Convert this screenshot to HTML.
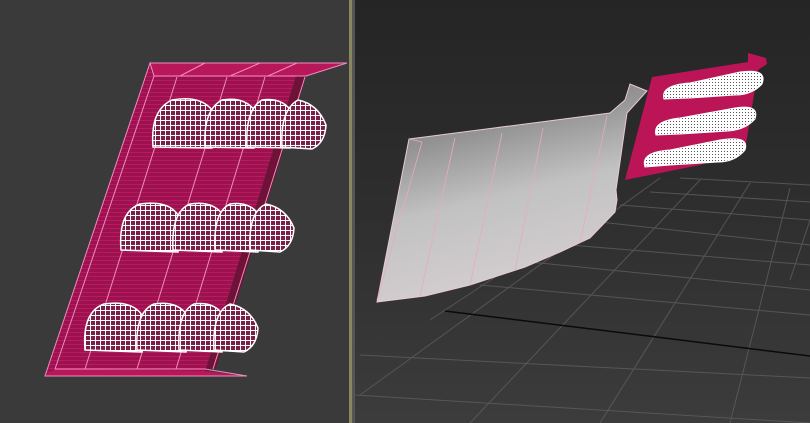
<!DOCTYPE html>
<html><head><meta charset="utf-8"><style>html,body{margin:0;padding:0;background:#3a3a3a}svg{display:block}</style></head>
<body>
<svg width="810" height="423" viewBox="0 0 810 423" xmlns="http://www.w3.org/2000/svg">
<defs>
<linearGradient id="rbg" x1="0" y1="0" x2="0" y2="1">
<stop offset="0" stop-color="#252525"/><stop offset="0.5" stop-color="#2e2e2e"/><stop offset="1" stop-color="#3c3c3c"/>
</linearGradient>
<linearGradient id="glass" x1="0" y1="0" x2="0.3" y2="1">
<stop offset="0" stop-color="#7e7e7e"/><stop offset="0.3" stop-color="#929292"/><stop offset="0.6" stop-color="#c2c2c2"/><stop offset="1" stop-color="#d4ced0"/>
</linearGradient>
<pattern id="stripe" width="6" height="4" patternUnits="userSpaceOnUse">
<rect width="6" height="4" fill="#9c1250"/><rect width="6" height="1" fill="#b81a5c"/>
</pattern>
<pattern id="grid" width="5" height="5" patternUnits="userSpaceOnUse">
<rect width="5" height="5" fill="#7a1f48"/><path d="M0 0.5H5M0.5 0V5" stroke="#fff" stroke-width="1"/>
</pattern>
<pattern id="fine" width="3" height="3" patternUnits="userSpaceOnUse">
<rect width="3" height="3" fill="#fff"/><rect x="1" y="1" width="1" height="1" fill="#555"/>
</pattern>
</defs>
<rect x="0" y="0" width="350" height="423" fill="#3a3a3a"/>
<rect x="349" y="0" width="3" height="423" fill="#8a8660"/>
<rect x="352" y="0" width="3" height="423" fill="#555"/>
<rect x="355" y="0" width="455" height="423" fill="url(#rbg)"/>

<polygon points="150,63 347,63 306,76 296,76 205,372 247,376 45,376" fill="url(#stripe)"/>
<polygon points="296,76 306,76 216,368 205,372" fill="#6e1238"/>
<polygon points="150,63 347,63 306,76 154,76" fill="#b8185a"/>
<polygon points="45,376 247,376 205,371 55,369" fill="#b8185a"/>
<g stroke="#f08cc0" stroke-width="1" fill="none">
<polyline points="150,63 347,63 306,76 154,76 150,63 45,376 247,376 205,369 55,369"/>
<line x1="154" y1="76" x2="55" y2="369"/>
<line x1="177" y1="77" x2="85" y2="369"/>
<line x1="227" y1="77" x2="137" y2="369"/>
<line x1="265" y1="77" x2="176" y2="369"/>
<line x1="305" y1="77" x2="213" y2="369"/>
<line x1="180" y1="76" x2="205" y2="63"/><line x1="230" y1="76" x2="260" y2="63"/><line x1="268" y1="76" x2="297" y2="63"/>
</g>

<g stroke="#fff" stroke-width="1.5">
<g>
<path d="M153 147 Q150 110 172 100 Q200 95 212 110 Q215 130 212 148 Z" fill="url(#grid)"/>
<path d="M205 147 Q203 110 222 100 Q245 96 256 112 Q258 130 254 148 Z" fill="url(#grid)"/>
<path d="M247 147 Q245 110 262 100 Q282 97 292 112 Q294 130 290 148 Z" fill="url(#grid)"/>
<path d="M282 147 Q280 110 298 100 Q318 104 326 125 Q325 143 312 149 Z" fill="url(#grid)"/>
</g>
<g>
<path d="M121 250 Q118 212 140 204 Q168 200 178 215 Q181 232 178 252 Z" fill="url(#grid)"/>
<path d="M173 250 Q171 212 190 204 Q213 200 224 216 Q226 232 222 252 Z" fill="url(#grid)"/>
<path d="M215 250 Q213 212 230 204 Q250 201 260 216 Q262 232 258 252 Z" fill="url(#grid)"/>
<path d="M250 250 Q248 212 266 204 Q286 208 294 228 Q293 246 280 252 Z" fill="url(#grid)"/>
</g>
<g>
<path d="M85 350 Q82 312 104 304 Q132 300 142 315 Q145 332 142 352 Z" fill="url(#grid)"/>
<path d="M137 350 Q135 312 154 304 Q177 300 188 316 Q190 332 186 352 Z" fill="url(#grid)"/>
<path d="M179 350 Q177 312 194 304 Q214 301 224 316 Q226 332 222 352 Z" fill="url(#grid)"/>
<path d="M214 350 Q212 312 230 304 Q250 308 258 328 Q257 346 244 352 Z" fill="url(#grid)"/>
</g>
</g>

<g stroke="#5e5e5e" stroke-width="1" fill="none" opacity="0.8">
<line x1="680" y1="178" x2="810" y2="185"/>
<line x1="650" y1="192" x2="810" y2="202"/>
<line x1="620" y1="205" x2="810" y2="220"/>
<line x1="600" y1="222" x2="810" y2="245"/>
<line x1="570" y1="245" x2="810" y2="265"/>
<line x1="530" y1="262" x2="810" y2="290"/>
<line x1="480" y1="285" x2="810" y2="315"/>
<line x1="360" y1="355" x2="810" y2="378"/>
<line x1="355" y1="395" x2="810" y2="423"/>
<line x1="600" y1="208" x2="430" y2="320"/>
<line x1="700" y1="180" x2="470" y2="423"/>
<line x1="750" y1="183" x2="600" y2="423"/>
<line x1="790" y1="188" x2="730" y2="423"/>
<line x1="660" y1="178" x2="360" y2="395"/>
<line x1="810" y1="220" x2="790" y2="280"/>
</g>
<line x1="445" y1="311" x2="810" y2="356" stroke="#0a0a0a" stroke-width="1.5"/>

<path d="M409 139 L610 113 L625 100 L630 84 L647 91 L627 113 L616 190 L617 200 L615 212 L590 238 L560 252 L525 267 L470 285 L425 296 L377 302 Z" fill="url(#glass)" stroke="#e8c8d4" stroke-width="1"/>
<g stroke="#e8aac0" stroke-width="0.8" fill="none">
<line x1="422" y1="142" x2="377" y2="300"/>
<line x1="455" y1="138" x2="420" y2="296"/>
<line x1="502" y1="133" x2="470" y2="285"/>
<line x1="543" y1="128" x2="515" y2="270"/>
<line x1="607" y1="116" x2="580" y2="243"/>
<line x1="409" y1="139" x2="422" y2="142"/>
</g>

<path d="M652 77 L748 62 L748 53 L766 58 L767 64 L758 70 L745 150 L700 165 L625 180 Z" fill="#bb1558"/>
<g fill="url(#fine)" stroke="#fff" stroke-width="1">
<path d="M664 99 Q660 85 690 83 L740 72 Q768 68 762 84 Q752 95 735 95 L690 98 Z"/>
<path d="M656 135 Q652 121 680 118 L735 108 Q760 104 755 119 Q745 130 728 131 L680 134 Z"/>
<path d="M645 167 Q640 152 670 150 L720 140 Q750 135 745 150 Q735 162 718 162 L670 165 Z"/>
</g>
</svg>
</body></html>
